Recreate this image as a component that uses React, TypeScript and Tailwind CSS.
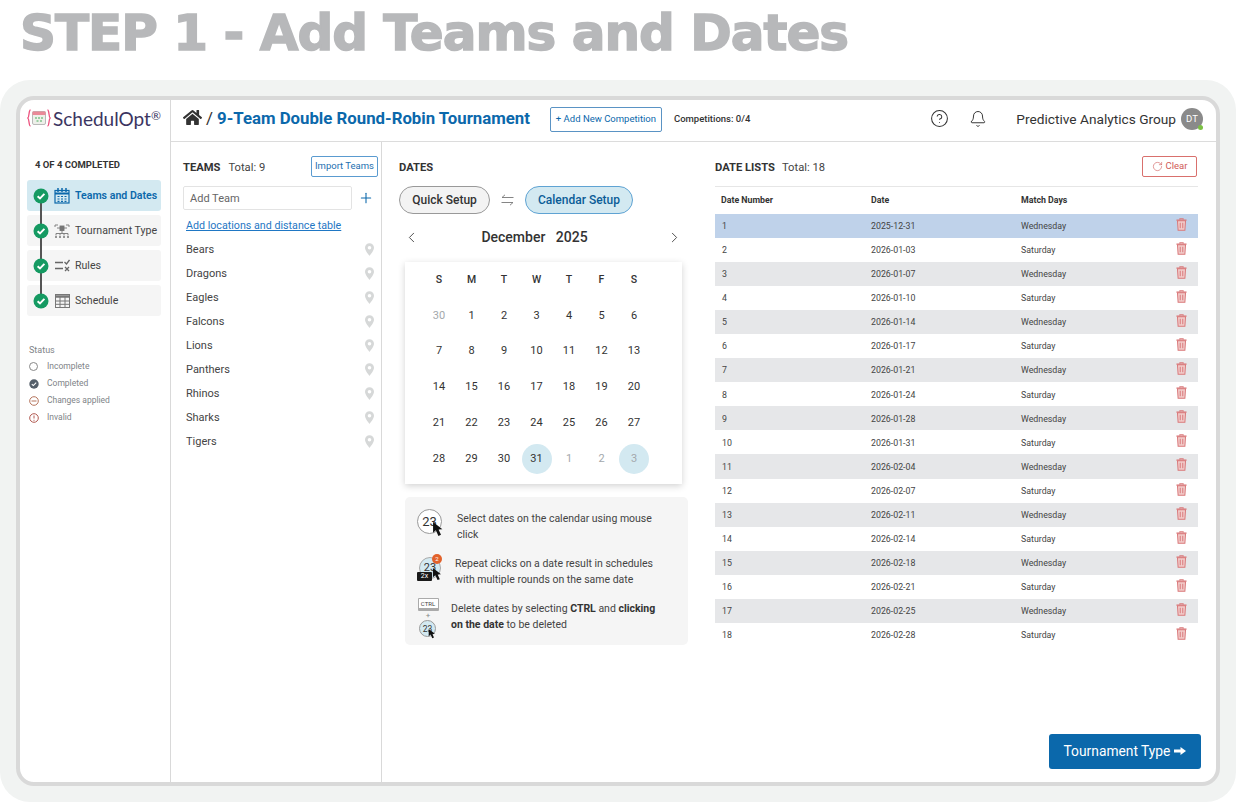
import React from "react";
import { FaHome } from "react-icons/fa";
import { ChevronLeft, ChevronRight, Plus, Bell, CircleHelp, RotateCw } from "lucide-react";

const teams = ["Bears", "Dragons", "Eagles", "Falcons", "Lions", "Panthers", "Rhinos", "Sharks", "Tigers"];
const dates: [string, string][] = [
  ["2025-12-31", "Wednesday"], ["2026-01-03", "Saturday"], ["2026-01-07", "Wednesday"], ["2026-01-10", "Saturday"],
  ["2026-01-14", "Wednesday"], ["2026-01-17", "Saturday"], ["2026-01-21", "Wednesday"], ["2026-01-24", "Saturday"],
  ["2026-01-28", "Wednesday"], ["2026-01-31", "Saturday"], ["2026-02-04", "Wednesday"], ["2026-02-07", "Saturday"],
  ["2026-02-11", "Wednesday"], ["2026-02-14", "Saturday"], ["2026-02-18", "Wednesday"], ["2026-02-21", "Saturday"],
  ["2026-02-25", "Wednesday"], ["2026-02-28", "Saturday"],
];
const weeks = [
  ["30", "1", "2", "3", "4", "5", "6"],
  ["7", "8", "9", "10", "11", "12", "13"],
  ["14", "15", "16", "17", "18", "19", "20"],
  ["21", "22", "23", "24", "25", "26", "27"],
  ["28", "29", "30", "31", "1", "2", "3"],
];

function Check() {
  return (
    <svg width="16" height="16" viewBox="0 0 16 16" className="shrink-0 relative">
      <circle cx="8" cy="8" r="7.5" fill="#159a62" />
      <path d="M4.6 8.2l2.4 2.3 4.4-4.6" fill="none" stroke="#fff" strokeWidth="1.9" />
    </svg>
  );
}
function CalIcon() {
  return (
    <svg width="16" height="17" viewBox="0 0 16 17" fill="none" stroke="#0b68ab">
      <rect x="1" y="3.5" width="14" height="12.5" strokeWidth="1.2" />
      <path d="M1 6.500h14" strokeWidth="2" />
      <path d="M4 1v4M8 1v4M12 1v4" strokeWidth="1.5" />
      <path d="M3.500 9.500h2M7 9.500h2M10.500 9.500h2M3.500 12h2M7 12h2M10.500 12h2M3.500 14.300h2M7 14.300h2M10.500 14.300h2" strokeWidth="1.200" />
    </svg>
  );
}
function TourIcon() {
  return (
    <svg width="16" height="14" viewBox="0 0 16 14" fill="none" stroke="#777" strokeWidth="0.9">
      <rect x="6" y="2" width="4" height="4.500" fill="#777" />
      <path d="M1 3V1h3M15 3V1h-3M3 4h3M10 4h3M8 6.500v3M2 9.500h12M2 9.500v2M6 9.500v2M10 9.500v2M14 9.500v2" />
      <path d="M1 13h2M5 13h2M9 13h2M13 13h2" strokeWidth="1.600" />
    </svg>
  );
}
function RulesIcon() {
  return (
    <svg width="16" height="13" viewBox="0 0 16 13" fill="none" stroke="#666" strokeWidth="1.3">
      <path d="M1 3.500h8M1 9.500h8M10.500 3l2 2 3-4M11 8l4 4M15 8l-4 4" />
    </svg>
  );
}
function GridIcon() {
  return (
    <svg width="15" height="14" viewBox="0 0 15 14" fill="none" stroke="#777" strokeWidth="1">
      <rect x="0.5" y="0.5" width="14" height="13" />
      <path d="M0.5 2.500h14" strokeWidth="2.500" />
      <path d="M0.5 7h14M0.5 10.300h14M5 3v10.500M10 3v10.500" />
    </svg>
  );
}
function Trash() {
  return (
    <svg width="11" height="13" viewBox="0 0 12 14" fill="none" stroke="#d9787a" strokeWidth="1.1">
      <path d="M4.200 1.800V.7h3.600v1.100" />
      <path d="M.5 2.200h11" strokeWidth="1.400" />
      <path d="M1.600 2.800l.7 10.400h7.400l.7-10.400z" fill="#f2cdcb" />
      <path d="M4.600 5v6M7.400 5v6" />
    </svg>
  );
}
function Pin() {
  return (
    <svg width="9" height="13" viewBox="0 0 10 14" className="mr-[4px] mb-[2px]">
      <path fillRule="evenodd" d="M5 0a5 5 0 0 1 5 5c0 3.500-5 9-5 9S0 8.500 0 5a5 5 0 0 1 5-5zm0 3a2 2 0 1 0 0 4 2 2 0 0 0 0-4z" fill="#d6d8d8" />
    </svg>
  );
}
function Cursor({ size = 14 }: { size?: number }) {
  return (
    <svg width={size} height={size} viewBox="0 0 14 14" className="absolute">
      <path d="M1 0l0 10 2.600-2.200L6 13l2.400-1-2.300-5 3.600-.3z" fill="#111" />
    </svg>
  );
}
function Dial({ n, d, fill, border, text }: { n: string; d: number; fill: string; border: string; text: string }) {
  return <span className={`flex items-center justify-center rounded-full border-[1.5px] ${fill} ${border} ${text}`} style={{ width: d, height: d }}>{n}</span>;
}

export default function App() {
  return (
    <div className="w-[1236px] h-[802px] bg-white flex flex-col font-['Roboto',sans-serif] text-[#333] overflow-hidden">
      <div className="h-[80px] shrink-0 pl-[20px] pt-[4px]">
        <h1 className="font-['DejaVu_Sans',sans-serif] font-bold text-[#b7b8ba] text-[50px] leading-[58px] tracking-[-1px] [-webkit-text-stroke:1.5px_#b7b8ba] whitespace-nowrap">STEP 1 - Add Teams and Dates</h1>
      </div>
      <div className="flex-1 min-h-0 bg-[#f1f3f2] rounded-[30px] p-[16px]">
        <div className="h-full bg-white border-[4px] border-[#d9d9d9] rounded-[18px] overflow-hidden flex">
          {/* Sidebar */}
          <aside className="w-[151px] shrink-0 border-r border-[#d9d9d9] flex flex-col">
            <div className="h-[57px] shrink-0 pl-[7px] pt-[7px] flex items-start">
              <div className="flex items-center h-[22px]">
                <svg width="24" height="18" viewBox="0 0 24 18" fill="none">
                  <path d="M3.500 1C1.500 1 2.500 8 .8 9c1.700 1 .7 8 2.700 8M20.500 1c2 0 1 7 2.700 8-1.700 1-.7 8-2.700 8" stroke="#ec4f7c" strokeWidth="1.300" />
                  <rect x="5.500" y="2.500" width="13" height="13" rx="1.500" fill="#eef0ea" stroke="#b9b9b9" />
                  <rect x="5.500" y="2.500" width="13" height="3.500" fill="#ea8a98" />
                  <path d="M8 9h2M11 9h2M14 9h2M9.500 12h2M13 12h2" stroke="#7ec48a" strokeWidth="1.300" />
                </svg>
                <span className="ml-[2px] font-['Lato',sans-serif] text-[19px] text-[#3b3561] leading-none">SchedulOpt<span className="text-[12px] align-[6px]">®</span></span>
              </div>
            </div>
            <div className="pl-[15px] text-[9.500px] font-bold text-[#333] leading-[16px] h-[23px]">4 OF 4 COMPLETED</div>
            <div className="relative flex flex-col gap-[4px] pl-[7px] pr-[9px]">
              <div className="absolute left-[20px] top-[15px] h-[105px] w-[2px] bg-[#555]" />
              {[
                ["Teams and Dates", <CalIcon key="a" />],
                ["Tournament Type", <TourIcon key="b" />],
                ["Rules", <RulesIcon key="c" />],
                ["Schedule", <GridIcon key="d" />],
              ].map(([label, icon], i) => (
                <div key={i} className={`h-[31px] rounded-[3px] flex items-center pl-[6px] ${i === 0 ? "bg-[#d3e9f1]" : "bg-[#f5f5f5]"}`}>
                  <Check />
                  <span className="ml-[5px] w-[16px] flex justify-center">{icon}</span>
                  <span className={`ml-[5px] text-[10.600px] whitespace-nowrap pt-[1px] ${i === 0 ? "text-[#0b68ab] font-semibold" : "text-[#444]"}`}>{label}</span>
                </div>
              ))}
            </div>
            <div className="mt-[27px] pl-[9px] text-[9px] text-[#808488]">
              <div className="leading-[15px]">Status</div>
              {[
                ["Incomplete", <span key="a" className="w-[9px] h-[9px] rounded-full border border-[#888]" />],
                ["Completed", <svg key="b" width="10" height="10" viewBox="0 0 10 10"><circle cx="5" cy="5" r="4.700" fill="#555f6a" /><path d="M2.800 5.200l1.500 1.400 2.900-3" stroke="#fff" strokeWidth="1.100" fill="none" /></svg>],
                ["Changes applied", <svg key="c" width="10" height="10" viewBox="0 0 10 10" fill="none" stroke="#b5745c"><circle cx="5" cy="5" r="4.300" /><path d="M2.500 5h5" /></svg>],
                ["Invalid", <svg key="d" width="10" height="10" viewBox="0 0 10 10" fill="none" stroke="#b25a52"><circle cx="5" cy="5" r="4.300" /><path d="M5 2.500v3M5 6.800v1" /></svg>],
              ].map(([label, icon], i) => (
                <div key={i} className="h-[17px] flex items-center text-[8.500px]">
                  <span className="w-[18px] flex">{icon}</span>
                  <span>{label}</span>
                </div>
              ))}
            </div>
          </aside>

          <div className="flex-1 min-w-0 flex flex-col">
            {/* Header */}
            <header className="h-[42px] shrink-0 border-b border-[#dcdcdc] flex items-center pl-[12px] pr-[13px] pb-[3px]">
              <FaHome size={19} className="text-[#333] -mt-[3px]" />
              <span className="ml-[4px] text-[17px] text-[#333]">/</span>
              <span className="ml-[4px] text-[16.800px] font-bold text-[#0b68ab] whitespace-nowrap">9-Team Double Round-Robin Tournament</span>
              <button className="ml-[20px] h-[25px] w-[112px] border border-[#5a93c4] rounded-[2px] text-[9.500px] text-[#0b68ab]">+ Add New Competition</button>
              <span className="ml-[12px] text-[9.500px] font-medium text-[#333] whitespace-nowrap">Competitions: 0/4</span>
              <CircleHelp size={19} strokeWidth={1.300} className="ml-auto text-[#333] -mt-[1px]" />
              <Bell size={18} strokeWidth={1.300} className="ml-[20px] text-[#333] -mt-[1px]" />
              <span className="ml-[29px] text-[13.700px] text-[#333] whitespace-nowrap">Predictive Analytics Group</span>
              <span className="relative ml-[5px] w-[22px] h-[22px] rounded-full bg-[#8a8a8a] text-white text-[9.500px] flex items-center justify-center">
                DT
                <span className="absolute right-0 bottom-0 w-[5px] h-[5px] rounded-full bg-[#7bc043]" />
              </span>
            </header>

            <div className="flex-1 min-h-0 flex">
              {/* Teams */}
              <section className="w-[211px] shrink-0 border-r border-[#d9d9d9] pl-[12px] pr-[3px] pt-[13px]">
                <div className="flex items-center h-[22px]">
                  <span className="text-[11.200px] font-bold text-[#333] pt-[4px]">TEAMS</span>
                  <span className="ml-[8px] text-[11.200px] text-[#444] pt-[4px]">Total: 9</span>
                  <button className="ml-auto w-[67px] h-[21px] border border-[#5a9bd0] rounded-[2px] text-[9.500px] text-[#1c6fb0]">Import Teams</button>
                </div>
                <div className="mt-[9px] flex items-center">
                  <div className="w-[169px] h-[24px] border border-[#e3e3e3] rounded-[2px] flex items-center pl-[6px] text-[11px] text-[#666] pt-[2px]">Add Team</div>
                  <Plus size={16} strokeWidth={1.600} className="ml-[6px] text-[#0b68ab]" />
                </div>
                <div className="mt-[8px] ml-[3px] text-[10.700px] leading-[16px] text-[#1f77c4] underline">Add locations and distance table </div>
                <ul className="mt-[4px]">
                  {teams.map((t) => (
                    <li key={t} className="h-[24px] pl-[3px] flex items-center justify-between text-[11px] text-[#444]">
                      <span>{t}</span>
                      <Pin />
                    </li>
                  ))}
                </ul>
              </section>

              {/* Dates */}
              <section className="w-[333px] shrink-0 pl-[17px] pt-[13px]">
                <div className="h-[22px] flex items-center text-[11.200px] font-bold text-[#333] pt-[4px]">DATES</div>
                <div className="mt-[9px] flex items-center">
                  <span className="w-[91px] h-[28px] rounded-full border border-[#999] bg-[#f3f3f3] flex items-center justify-center text-[12px] font-medium text-[#333]">Quick Setup</span>
                  <svg width="13" height="12" viewBox="0 0 13 12" fill="none" stroke="#777" strokeWidth="0.9" className="ml-[11px]">
                    <path d="M12.500 3.500H1M4 .8L1 3.500M.5 8.500H12M9 11.200l3-2.700" />
                  </svg>
                  <span className="ml-[11px] w-[108px] h-[28px] rounded-full border border-[#5fa3d3] bg-[#d3e9f1] flex items-center justify-center text-[12px] font-medium text-[#0b5c97]">Calendar Setup</span>
                </div>
                <div className="mt-[9px] h-[28px] w-[281px] ml-[3.500px] flex items-center justify-between">
                  <ChevronLeft size={17} strokeWidth={1.300} className="text-[#444]" />
                  <span className="text-[14px] font-medium text-[#333] whitespace-pre -ml-[17px]">December   2025</span>
                  <ChevronRight size={17} strokeWidth={1.300} className="text-[#444]" />
                </div>
                <div className="mt-[11px] ml-[6px] w-[277px] h-[222px] bg-white shadow-[0_2px_7px_rgba(0,0,0,0.18)] pl-[17.750px] pt-[0.500px]">
                  <div className="grid grid-cols-[repeat(7,32.500px)]">
                    {["S", "M", "T", "W", "T", "F", "S"].map((d, i) => (
                      <div key={i} className="h-[35.700px] flex items-center justify-center text-[10.500px] font-medium text-[#333]">{d}</div>
                    ))}
                    {weeks.map((w, i) =>
                      w.map((d, j) => {
                        const muted = (i === 0 && j === 0) || (i === 4 && j > 3);
                        const on = i === 4 && (j === 3 || j === 6);
                        return (
                          <div key={`${i}-${j}`} className="h-[35.700px] flex items-center justify-center">
                            <span className={`w-[30px] h-[30px] rounded-full flex items-center justify-center text-[11px] ${on ? "bg-[#d3e9f1]" : ""} ${muted ? "text-[#a3a8ac]" : "text-[#333]"}`}>{d}</span>
                          </div>
                        );
                      })
                    )}
                  </div>
                </div>
                <div className="mt-[13px] ml-[6px] w-[283px] h-[148px] bg-[#f5f5f5] rounded-[5px] pt-[12px] pl-[12px] text-[10.500px] leading-[16px] text-[#444]">
                  <div className="flex items-start h-[28px]">
                    <span className="relative w-[28px] h-[28px] shrink-0">
                      <Dial n="23" d={25} fill="bg-white" border="border-[#999]" text="text-[13px] text-[#333]" />
                      <span className="absolute left-[15px] top-[13px]"><Cursor size={15} /></span>
                    </span>
                    <span className="ml-[12px] w-[205px] pt-[2px]">Select dates on the calendar using mouse click</span>
                  </div>
                  <div className="flex items-center mt-[19px] h-[32px]">
                    <span className="relative w-[26px] h-[32px] shrink-0">
                      <span className="absolute left-[2px] top-[1px]"><Dial n="23" d={22} fill="bg-[#d3e9f1]" border="border-[#aaa]" text="text-[11px] text-[#333]" /></span>
                      <span className="absolute left-[15px] top-[-2px] w-[10px] h-[10px] rounded-full bg-[#e2622b] text-white text-[6px] flex items-center justify-center">2</span>
                      <span className="absolute left-0 top-[16px] w-[15px] h-[9px] rounded-[1px] bg-[#1a1a1a] text-white text-[7px] leading-[9px] text-center">2x</span>
                      <span className="absolute left-[15px] top-[12px]"><Cursor size={13} /></span>
                    </span>
                    <span className="ml-[12px] w-[210px]">Repeat clicks on a date result in schedules with multiple rounds on the same date</span>
                  </div>
                  <div className="flex items-center mt-[7px] h-[44px]">
                    <span className="w-[22px] shrink-0 flex flex-col items-center translate-y-[1px]">
                      <span className="w-[21px] h-[13px] border border-[#aaa] border-b-[3px] rounded-[1px] bg-white text-[6px] leading-[9px] text-center text-[#444]">CTRL</span>
                      <span className="text-[8px] leading-[9px] text-[#888]">+</span>
                      <span className="relative w-[18px] h-[18px]">
                        <Dial n="23" d={17} fill="bg-[#d3e9f1]" border="border-[#999]" text="text-[8.500px] text-[#333]" />
                        <span className="absolute left-[9px] top-[9px]"><Cursor size={10} /></span>
                      </span>
                    </span>
                    <span className="ml-[12px] w-[215px]">Delete dates by selecting <b className="font-bold text-[#333]">CTRL</b> and <b className="font-bold text-[#333]">clicking on the date</b> to be deleted</span>
                  </div>
                </div>
              </section>

              {/* Date lists */}
              <section className="flex-1 min-w-0 pr-[18px] pt-[13px] pb-[13px] flex flex-col">
                <div className="flex items-center h-[22px]">
                  <span className="text-[11.200px] font-bold text-[#333] pt-[4px]">DATE LISTS</span>
                  <span className="ml-[7px] text-[11.200px] text-[#444] pt-[4px]">Total: 18</span>
                  <button className="ml-auto mr-[1px] w-[55px] h-[21px] border border-[#d9706d] rounded-[2px] flex items-center justify-center gap-[3px] text-[9.500px] text-[#d05a57]">
                    <RotateCw size={11} strokeWidth={1.300} />Clear
                  </button>
                </div>
                <div className="mt-[9px] border-t border-[#e6e6e6] h-[28px] flex items-center pl-[6px] text-[8.800px] font-bold text-[#333]">
                  <span className="w-[150px]">Date Number</span>
                  <span className="w-[150px]">Date</span>
                  <span>Match Days</span>
                </div>
                {dates.map(([d, day], i) => (
                  <div key={i} className={`h-[24.060px] shrink-0 flex items-center pl-[7px] text-[8.800px] text-[#444] ${i === 0 ? "bg-[#bfd2ea]" : i % 2 === 0 ? "bg-[#e6e7e9]" : ""}`}>
                    <span className="w-[149px] pt-[1.500px]">{i + 1}</span>
                    <span className="w-[150px] pt-[1.500px]">{d}</span>
                    <span className="pt-[1.500px]">{day}</span>
                    <span className="ml-auto mr-[11px] mb-[3px] flex"><Trash /></span>
                  </div>
                ))}
                <button className="mt-auto self-end -mr-[3px] w-[152px] h-[35px] rounded-[3px] bg-[#0b68ab] text-white text-[13.800px] pb-[1px] flex items-center justify-center">
                  Tournament Type
                  <svg width="12" height="10" viewBox="0 0 12 10" className="ml-[4px]"><path d="M0 3.500h6.500V1L12 5 6.500 9V6.500H0z" fill="#fff" /></svg>
                </button>
              </section>
            </div>
          </div>
        </div>
      </div>
    </div>
  );
}
